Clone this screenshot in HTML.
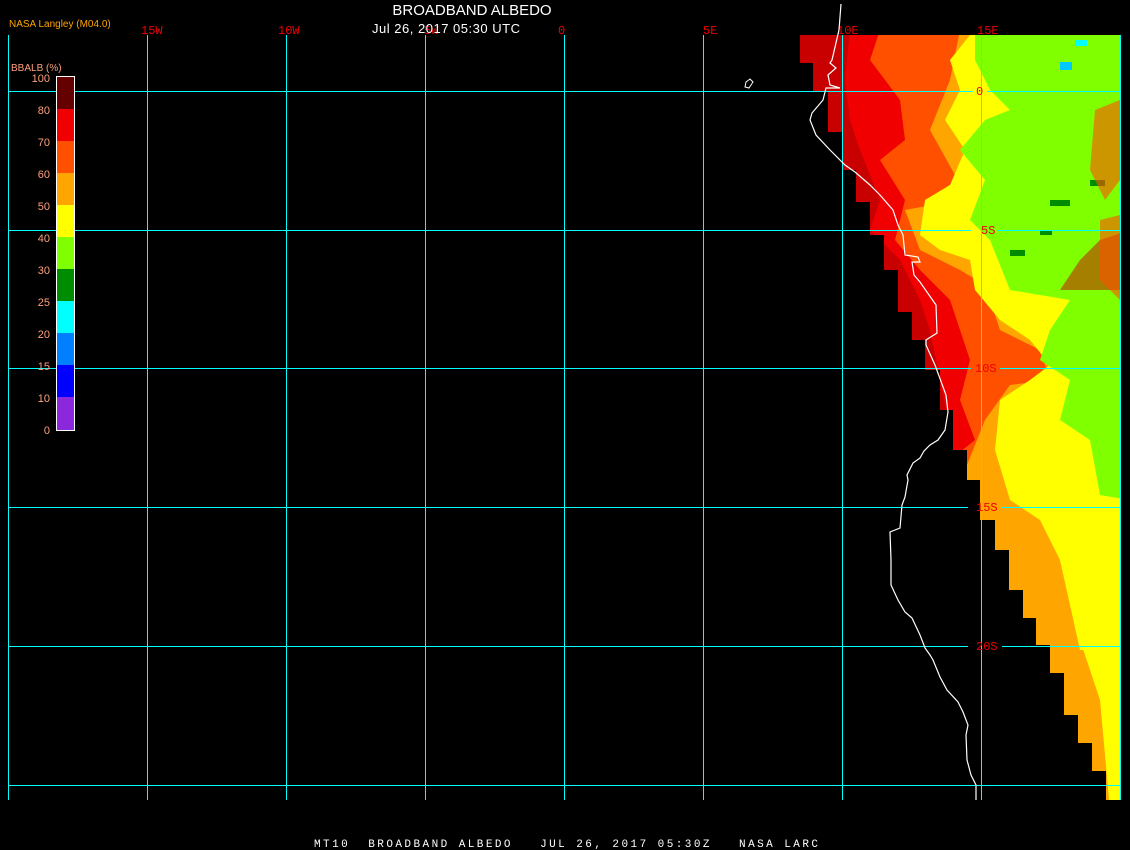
<!DOCTYPE html>
<html><head><meta charset="utf-8"><style>
html,body{margin:0;padding:0;background:#000;width:1130px;height:850px;overflow:hidden}
svg{display:block}
</style></head><body>
<svg width="1130" height="850" viewBox="0 0 1130 850" xmlns="http://www.w3.org/2000/svg">
<rect width="1130" height="850" fill="#000"/>
<defs>
<clipPath id="d"><polygon points="800,35 1120,35 1120,800 1106,800 1106,771 1092,771 1092,743 1078,743 1078,715 1064,715 1064,673 1050,673 1050,645 1036,645 1036,618 1023,618 1023,590 1009,590 1009,550 995,550 995,520 980,520 980,480 967,480 967,450 953,450 953,410 940,410 940,370 925,370 925,340 912,340 912,312 898,312 898,270 884,270 884,235 870,235 870,202 856,202 856,170 843,170 843,132 828,132 828,92 813,92 813,63 800,63"/></clipPath>
</defs>
<g clip-path="url(#d)">
<rect x="790" y="30" width="340" height="780" fill="#ffa500"/>
<polygon points="790,30 960,30 950,80 930,130 955,175 960,200 905,210 920,250 960,270 985,285 1000,330 1040,350 1050,380 1010,385 985,420 965,470 960,520 900,520 790,520" fill="#ff5000"/>
<polygon points="790,30 880,30 870,60 900,100 905,140 880,160 905,200 895,240 920,270 950,300 960,330 970,360 960,400 975,440 950,460 790,460" fill="#f00000"/>
<polygon points="790,30 850,30 845,80 850,120 860,150 880,200 870,230 900,260 920,300 930,330 940,380 950,430 790,430" fill="#c80000"/>
<polygon points="970,35 1130,35 1130,810 1110,810 1100,700 1080,640 1060,560 1040,520 1010,500 995,450 1000,400 1030,380 1050,365 1030,340 1000,320 975,290 970,260 940,250 920,235 925,200 950,185 965,150 945,120 960,90 950,60" fill="#ffff00"/>
<polygon points="1060,560 1130,560 1130,650 1080,650" fill="#ffff00"/>
<polygon points="975,35 1130,35 1130,500 1100,495 1090,440 1060,420 1070,380 1040,360 1050,330 1070,300 1010,290 990,240 970,220 985,180 960,150 985,120 1010,110 990,90 975,60" fill="#80ff00"/>
<polygon points="1060,290 1130,290 1130,230 1100,240 1080,260" fill="#c80000" opacity="0.5"/>
<rect x="1050" y="200" width="20" height="6" fill="#008c00"/>
<rect x="1090" y="180" width="15" height="6" fill="#008c00"/>
<rect x="1010" y="250" width="15" height="6" fill="#008c00"/>
<rect x="1040" y="230" width="12" height="5" fill="#008c00"/>
<rect x="1060" y="62" width="12" height="8" fill="#00c8ff"/>
<rect x="1075" y="40" width="12" height="6" fill="#00ffff"/>
<polygon points="1095,110 1120,100 1120,180 1105,200 1090,170" fill="#ff5000" opacity="0.6"/>
<polygon points="1100,220 1120,215 1120,300 1100,280" fill="#ff5000" opacity="0.6"/>
</g>
<g fill="#00ffff" shape-rendering="crispEdges">
<rect x="8" y="35" width="1" height="765"/>
<rect x="147" y="35" width="1" height="765"/>
<rect x="286" y="35" width="1" height="765"/>
<rect x="425" y="35" width="1" height="765"/>
<rect x="564" y="35" width="1" height="765"/>
<rect x="703" y="35" width="1" height="765"/>
<rect x="842" y="35" width="1" height="765"/>
<rect x="981" y="35" width="1" height="765"/>
<rect x="1120" y="35" width="1" height="765"/>
<rect x="8" y="91" width="965" height="1"/><rect x="987" y="91" width="133" height="1"/>
<rect x="8" y="230" width="963" height="1"/><rect x="998" y="230" width="122" height="1"/>
<rect x="8" y="368" width="963" height="1"/><rect x="1000" y="368" width="120" height="1"/>
<rect x="8" y="507" width="960" height="1"/><rect x="1002" y="507" width="118" height="1"/>
<rect x="8" y="646" width="960" height="1"/><rect x="1002" y="646" width="118" height="1"/>
<rect x="8" y="785" width="1112" height="1"/>
</g>
<g font-family="Liberation Mono, monospace" font-size="12" fill="#f00000">
<text x="976" y="95">0</text>
<text x="981" y="234">5S</text>
<text x="975" y="372">10S</text>
<text x="976" y="511">15S</text>
<text x="976" y="650">20S</text>
<text x="141" y="34">15W</text>
<text x="278" y="34">10W</text>
<text x="424" y="34">5W</text>
<text x="558" y="34">0</text>
<text x="703" y="34">5E</text>
<text x="837" y="34">10E</text>
<text x="977" y="34">15E</text>
</g>
<polyline fill="none" stroke="#fff" stroke-width="1.2" points="841,4 839,30 832,60 830,63 836,68 828,75 830,85 840,88 826,88 823,100 812,113 810,120 816,135 830,150 845,165 855,172 870,185 880,195 893,210 898,225 903,235 905,255 918,257 920,262 912,262 914,275 920,282 936,305 937,333 926,340 926,345 935,365 946,395 948,412 945,430 938,440 930,445 924,451 920,458 913,463 907,475 908,480 905,497 902,505 900,528 890,532 891,560 891,585 898,600 905,612 912,618 920,635 925,648 930,655 933,660 940,677 947,690 958,702 963,712 968,725 966,735 967,760 971,775 976,785 976,800"/>
<path d="M746,82 L750,79 L753,82 L749,88 L745,87 Z" fill="none" stroke="#fff" stroke-width="1"/>
<text x="472" y="15" text-anchor="middle" font-family="Liberation Sans, sans-serif" font-size="15" fill="#fff">BROADBAND ALBEDO</text>
<text x="446" y="33" text-anchor="middle" font-family="Liberation Sans, sans-serif" font-size="13" fill="#fff" textLength="148">Jul 26, 2017 05:30 UTC</text>
<text x="9" y="27" font-family="Liberation Sans, sans-serif" font-size="10" fill="#ffa500">NASA Langley (M04.0)</text>
<text x="11" y="71" font-family="Liberation Sans, sans-serif" font-size="10" fill="#ffa07a">BBALB (%)</text>
<g shape-rendering="crispEdges">
<rect x="57" y="77" width="17" height="65" fill="#640000"/>
<rect x="57" y="109" width="17" height="33" fill="#f00000"/>
<rect x="57" y="141" width="17" height="33" fill="#ff5000"/>
<rect x="57" y="173" width="17" height="33" fill="#ffa500"/>
<rect x="57" y="205" width="17" height="33" fill="#ffff00"/>
<rect x="57" y="237" width="17" height="33" fill="#80ff00"/>
<rect x="57" y="269" width="17" height="33" fill="#008c00"/>
<rect x="57" y="301" width="17" height="33" fill="#00ffff"/>
<rect x="57" y="333" width="17" height="33" fill="#0080ff"/>
<rect x="57" y="365" width="17" height="33" fill="#0000ff"/>
<rect x="57" y="397" width="17" height="33" fill="#8c28dc"/>
<rect x="56.5" y="76.5" width="18" height="354" fill="none" stroke="#fff" stroke-width="1"/>
</g>
<g font-family="Liberation Sans, sans-serif" font-size="11" fill="#ffa07a" text-anchor="end">
<text x="50" y="82">100</text>
<text x="50" y="114">80</text>
<text x="50" y="146">70</text>
<text x="50" y="178">60</text>
<text x="50" y="210">50</text>
<text x="50" y="242">40</text>
<text x="50" y="274">30</text>
<text x="50" y="306">25</text>
<text x="50" y="338">20</text>
<text x="50" y="370">15</text>
<text x="50" y="402">10</text>
<text x="50" y="434">0</text>
</g>
<text x="314" y="847" font-family="Liberation Mono, monospace" font-size="11" fill="#fff" xml:space="preserve" textLength="504">MT10  BROADBAND ALBEDO   JUL 26, 2017 05:30Z   NASA LARC</text>
</svg>
</body></html>
